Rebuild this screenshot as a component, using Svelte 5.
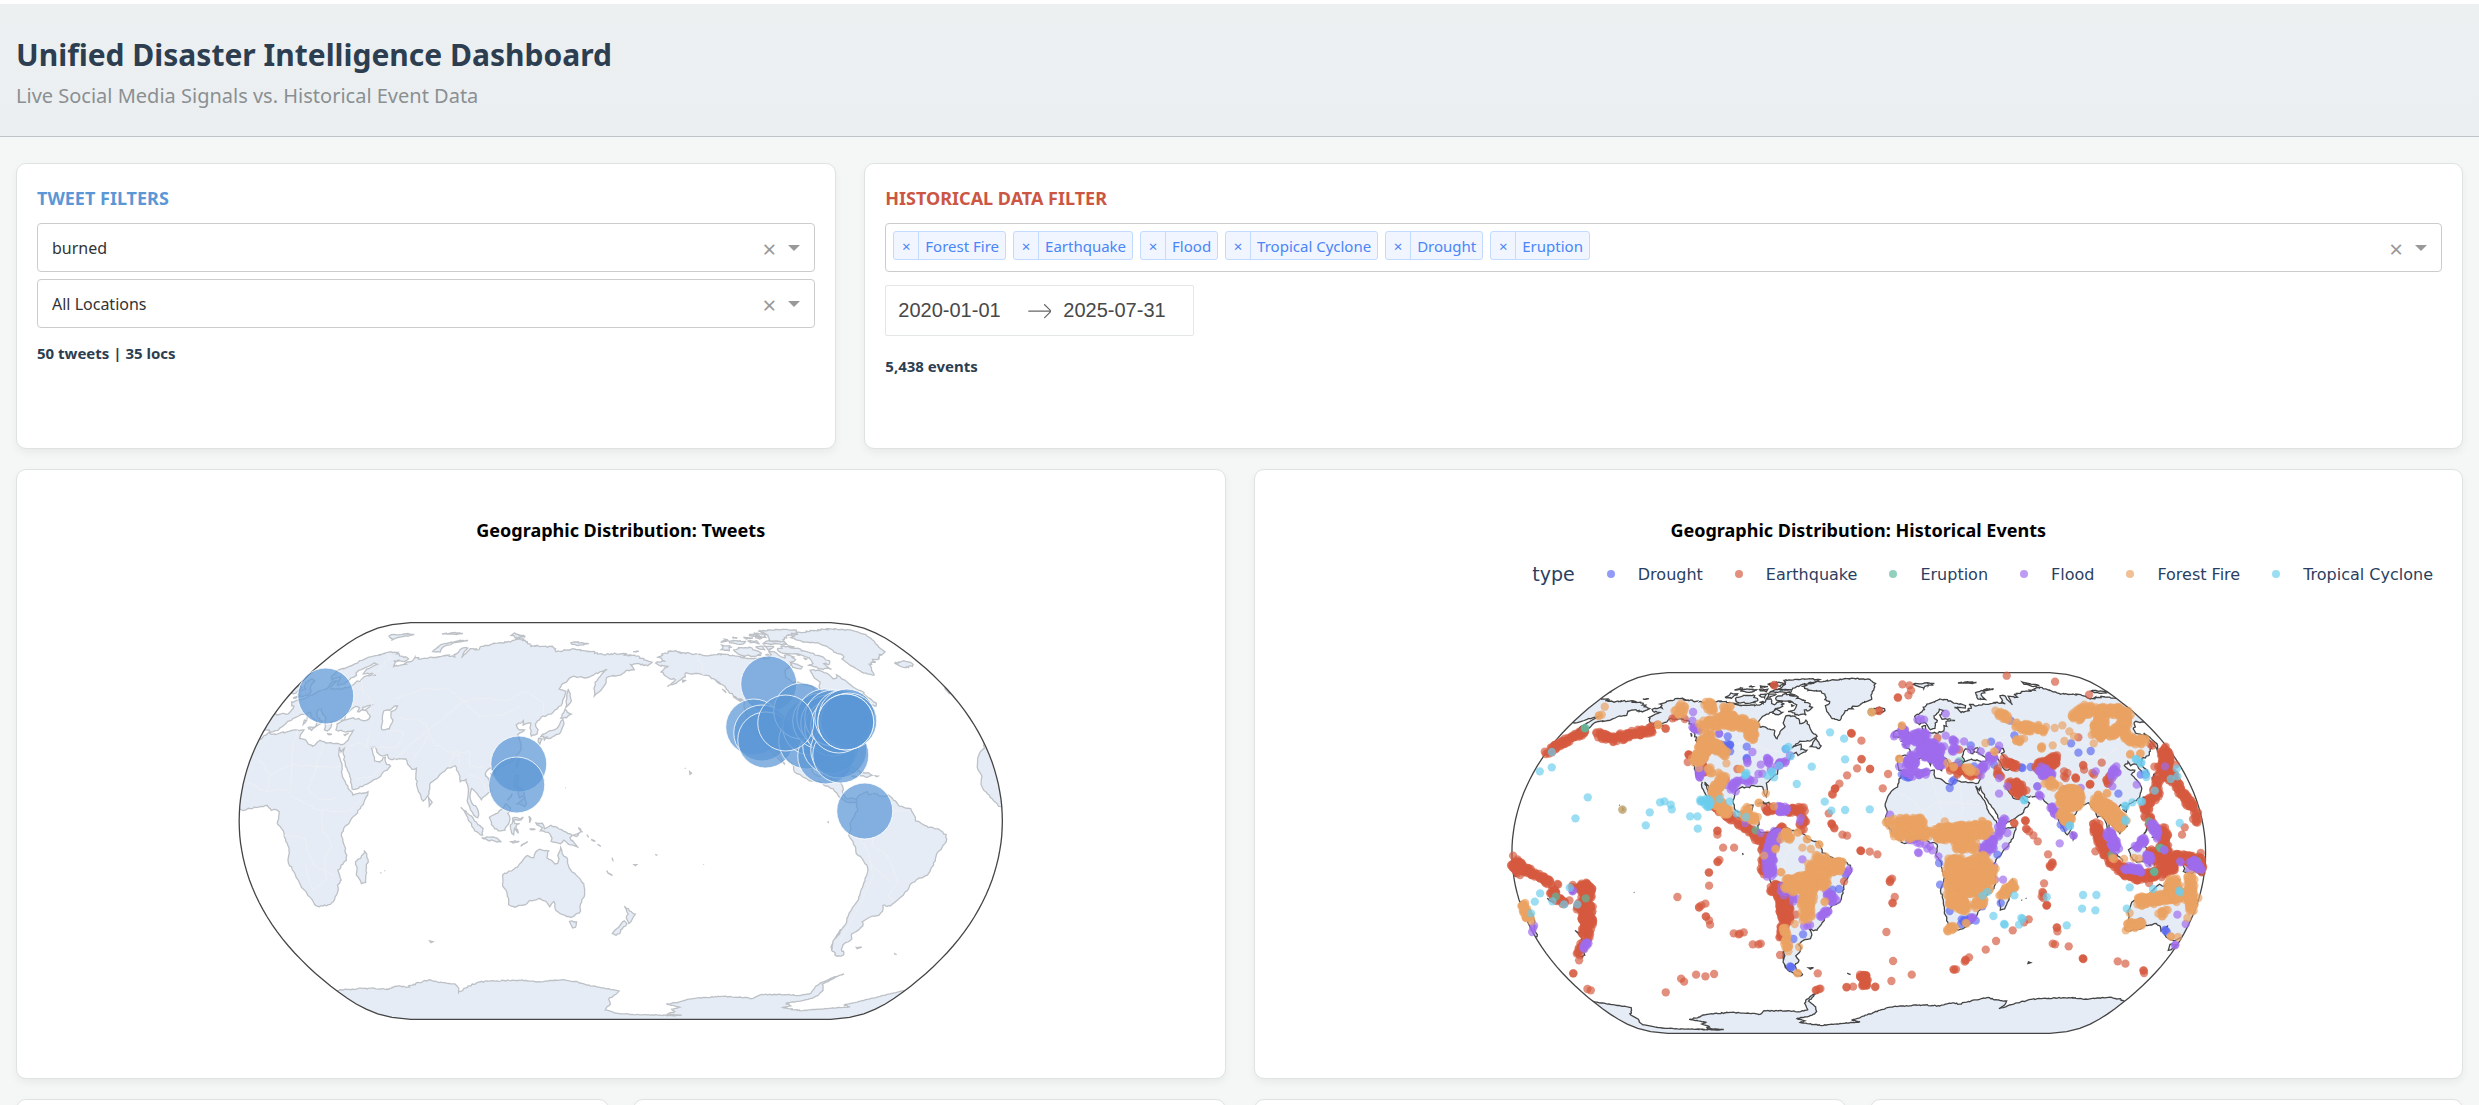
<script>
  // natural earth projection, input in degrees
  function project(lon, lat) {
    const l = (lon * Math.PI) / 180;
    const p = (lat * Math.PI) / 180;
    const p2 = p * p;
    const p4 = p2 * p2;
    return [
      l * (0.8707 - 0.131979 * p2 + p4 * (-0.013791 + p4 * (0.003971 * p2 - 0.001529 * p4))),
      -p * (1.007226 + p2 * (0.015085 + p4 * (-0.044475 + 0.028874 * p2 - 0.005916 * p4))),
    ];
  }

  // small seeded generator so the page looks the same on each load
  function makeRandom(seed) {
    let s = seed;
    return () => {
      s = (s * 1664525 + 1013904223) % 4294967296;
      return s / 4294967296;
    };
  }

  function parse(text) {
    return text.trim().split(/\s+/).map((p) => p.split(",").map(Number));
  }

  const landRings = [
    // europe, asia, africa
    "-6,36 -9,33 -10,29.5 -13,28 -16,24 -17,21 -16,18 -17.3,15 -16.5,12.5 -15,11 -13,9 -11,7 -8,4.5 -4,5 1,6 4,6.3 6,4.3 8.5,4.6 9.7,3.8 9.7,1 9,-1 12,-5 13,-9 13.7,-11 12,-17 14,-22 15,-27 18,-32 18.2,-34 20,-34.8 25,-34 28,-32.8 31,-30 32.6,-28 33,-26 35.5,-24 35,-20 37,-18 40,-16 40.6,-14 40,-10 39,-6 41,-2 44,1 48,5 51,10.5 51,12 48,11.2 44,10.5 43,12 40,15 37.3,19 36.5,22 34,26 32.4,30 34,28 35,29.5 35,28 39,21.5 42,17 43.3,13 45,13 50,15 55,17.5 59.8,22.3 57,24 56.3,26 54,24 51.5,24.5 51,26 50,27 48,30 50,30 51.5,28 54,26.6 57,27 58,25.5 62,25 66.5,25.2 69,22.3 70.5,21 72.5,21.5 73,17 75,12 77.5,8.1 80,11 80.2,15.5 82.5,17 87,21.2 91,22.5 94,18 94.4,16 97,17 98.6,13 98.3,8.3 101,3.5 103.5,1.3 104,2.5 103.3,5 100.5,7.5 99.5,10 100,13.2 101,12.7 103,11 105,8.7 107,10.4 109.2,12 108.5,15.5 106,19 108,21.6 110,20.5 113.5,22.2 117,23.5 119.8,26 122,29.5 121.5,31.5 119.3,35 122.4,37 119,37.5 117.8,39 121,40.8 121.3,39 125,39.8 125,37.8 126.3,34.5 129,35.3 129.3,37 127.5,39.5 130,42.3 135,43.6 140,48 141,53 137,54 138,56 143,59.3 152,59 155,60 160,61.7 163,62.5 160,60.5 156.5,57 156.7,51 160,53.3 162.5,56.2 163,59 170,60 174,62 179,62.5 177,64.8 182,65.3 187,64.3 190,66 185,67 180,69 170,70 160,69.6 152,71 140,72.5 130,71 127,73.5 113,74 107,76.7 104,77.7 98,76.2 87,75 80,73.5 80.5,72 77,72.3 74.5,72.5 73,68 72,71 72.5,72.8 69,72.8 67,69.5 68.5,68.4 64,69.4 60,68.7 54,68.4 47,67.5 44,68.4 44,66.2 40,64.7 36,64 34.8,66 33,66.6 40,66.3 41,67.5 33,69.4 28,71 22,70 15,68 12.5,65.5 9,63.7 5,62 5.3,59 7,58 10.5,59.3 12,57 13,55.5 16,56.2 17,58.8 18.8,60 17.3,61 17.5,62.3 21,64 22.5,65.7 25,65 21.5,62.8 22,60.6 28,60.5 30,60 24,59.4 23.6,58 24,57.2 22,57.5 21,55 19,54.4 14,54 11,54 10,55 10.5,57.5 8.2,57 8.7,54 5,53 2.5,51.2 1,50 -1.5,49.5 -4.7,48.5 -1.3,46 -1.8,43.5 -9,43.2 -9,38.7 -8.8,37 -6.5,37 -5.5,36 -2,36.8 0,39.5 3,42 5,43.3 9,44.3 10.5,42.8 12.3,41.7 15.7,40 16,38.1 17,39 18.3,39.9 16,41.6 14,42.5 12.5,44 12.3,45.4 13.7,45.6 15.5,44 19,42 19.5,40.3 21.3,37 23,36.6 24,38 22.8,40.3 26,40.8 29,41.1 28,43 29.5,45.3 31,46.6 33.5,46 33.5,44.5 36.3,45.2 35,46.3 39,47.2 37,45 41.5,42.5 41.3,41.3 38,41 33,42 29,41 26.3,39.5 27.2,37 30.5,36.6 32.5,36.1 36,36.8 35.5,33 34,31.2 31,31.5 25,31.7 21.5,32.8 20,31 19,30.3 15.3,32.2 11,33.5 10.5,35 11,37 5,36.8 -2,35.1 -5,35.5 -6,36",
    // north america
    "-168,65.6 -164,66.5 -162,66.2 -164,67.8 -166,68.4 -161,70.3 -156,71.2 -149,70.5 -141,69.6 -135,69 -128,70 -122,69.7 -115,68.2 -108,67.8 -98,67.8 -95,69.5 -95,71.8 -91,70 -88,68 -85,69.6 -81.5,68.5 -84,66.3 -87,64.8 -93,62 -94.5,59 -92.5,57 -88,56.5 -82.3,55 -82,53 -79.8,51.3 -79,54.5 -76.7,57 -78.5,58.8 -78,62.3 -73.7,62.3 -69.5,61 -68,58.5 -66,58.7 -64.5,60.2 -61.5,57 -60,55 -56,52.5 -60,50.2 -66,50.2 -70,47 -65,48.8 -64.5,46.3 -61,46 -65.7,43.6 -67,45 -70,43.7 -70.2,41.8 -74,40.6 -75.8,37.5 -75.8,35.3 -78,34 -81.3,31.3 -80.1,27 -80.5,25.3 -82,27 -83,29.5 -85,29.8 -89.5,30.2 -90,29.2 -94,29.6 -97.2,27.7 -97.8,22.5 -96,19 -94.5,18.2 -91.5,18.6 -90.3,21 -87,21.4 -88,17.5 -88.5,15.8 -84,15.7 -83.3,14 -83.6,11 -82,9 -80,9.3 -77.4,8.6 -77.8,7.5 -80,7.6 -83,8.2 -85.8,10.2 -88,13.1 -92,14.5 -94.5,16.1 -98,16.2 -102,18 -105.5,20 -105.5,22.5 -109,25.8 -112.5,30 -114.7,31.5 -113,28.8 -111,25.5 -109.5,23 -112,25 -115,28.5 -117,32.3 -120.6,34.6 -122.5,37.5 -124.3,40.3 -124,46 -123,48.5 -128,51 -131,55 -136,58.5 -140,60 -146,60.8 -151.5,61 -152,59.3 -157,57 -163,55 -158,58 -162,59 -165.5,61.5 -161,64 -166,64.5 -168,65.6",
    // south america
    "-77.4,8.6 -75.5,10.7 -72,12 -71.5,10.8 -68.5,11.2 -65,10.1 -62,10.6 -60,8.5 -57,6 -52,5 -50,1.5 -50,0 -47.5,-.8 -44,-2.7 -39,-3.2 -35.3,-5.5 -35,-8.5 -38.5,-13 -39.2,-18 -41,-22 -44.5,-23.2 -48,-25.7 -48.7,-28.5 -52,-32.5 -54,-34.5 -58,-34.3 -57,-36.5 -58,-38.3 -62,-39 -65,-41 -63.7,-42.5 -65.5,-44.8 -67.5,-46 -66,-48 -69,-50.5 -68.5,-52.4 -65.3,-54.8 -69,-55.3 -73.5,-52.8 -75.5,-49 -75,-46.5 -73,-42 -73.5,-37.5 -71.6,-33 -71.3,-29 -70.2,-20 -71.3,-17.8 -76,-14 -79,-8.5 -81.2,-6 -80.3,-3.3 -80.8,-1 -79,1.5 -77.3,4 -77.4,8.6",
    "-73,78.2 -65,80.8 -50,82.3 -35,83.5 -22,82.5 -18,80 -20,76 -22,72 -24,70.2 -30,68.2 -37,66 -40,65 -43,60.1 -48,61 -52,64.5 -53.5,67.5 -51,69.7 -54.5,70.7 -55,73 -59,75.6 -68,76 -71,77",
    "-81,73.6 -76,72.7 -68,70.2 -62,66.7 -64,65 -67,65.3 -65,62.7 -71,63 -77.5,64.5 -73.5,65.3 -73,68 -78,70 -87,70.2 -89,71.3 -85,73.6",
    "-117,71.3 -113,73 -106,73.3 -101,70 -105,68.8 -114,69.2",
    "-125,72 -123,74.2 -117,73.3 -120,71.5",
    "-90,76.5 -80,76.3 -75,79 -64,81.5 -62,82.6 -75,83.1 -90,82 -87,79.5",
    "-95,75 -80,74.7 -80,75.8 -90,76.6",
    "-117,75.5 -110,74.7 -106,76 -115,76.5",
    "-122,76 -117,76.5 -119,77.4",
    "-113,77.8 -110,78.1 -112,78.5",
    "-100,79.5 -93,79.2 -96,80",
    "-99,69.3 -96,68.6 -97,69.8",
    "-79.5,69.8 -76.8,69.5 -78,69.2",
    "-76.5,68 -75,67.5 -76,67.2",
    "-80.5,73.7 -77,73.4 -79,72.8",
    "-97.5,78.2 -93,77.8 -95,77.5",
    "-86.5,66 -81,64 -83,62.8 -87,63.6",
    "-95,81 -88,80 -90,78.3 -96,79",
    "-96,74 -90,73.9 -92,72.7 -95,72.2",
    "-102,73 -97,71.7 -97,73.8",
    "-104,76.4 -98,75 -98,76.6",
    "-105,78.5 -99,78 -104,77.5",
    "-59.3,47.7 -56.5,51.5 -53,48 -54,46.8",
    "-84.8,22 -82,23 -77,21.8 -74.3,20.2 -77.5,19.9 -81,22",
    "-74,19.8 -70,19.7 -68.5,18.6 -71,17.8 -74.2,18.4",
    "-67,18.4 -65.7,18.3 -66.5,18",
    "-78.3,18.3 -76.3,18.1 -77.3,17.8",
    "-24,65.5 -20,66 -16,66.4 -13.7,65 -18.5,63.5 -22.5,64",
    "-5.5,50.1 1.2,51.2 1.5,52.7 -.5,54 -2,55.8 -2,57.5 -5,58.5 -6,56.7 -4.8,54.8 -3,54 -4.8,53 -4.5,51.7 -3,51.4",
    "-10,52 -6.3,52.2 -5.7,54.5 -8,55.2 -10,54",
    "11,79.5 20,80.3 27,80 20,78.5 17,76.8",
    "46,80.4 54,80.2 60,80.6 52,80.9",
    "52,71 57,70.8 56,73.3 62,75.7 68.5,76.8 62,76.4 55,75 52,72",
    "95,79.5 96,81 102,79.4 105,78.5 100,78",
    "138,75.5 145,75.6 150,75 142,74.2",
    "178.8,71 182.5,71.3 180,70.9",
    "142,54 143.5,52 144.6,49 143,47 142,46.2 142,50",
    "140,41.8 141.7,45.4 145.3,43.5 143,42",
    "141.2,41.3 142,39.5 140.7,36 138,34.7 136,33.6 131,34.3 133,35.5 136.5,36.8 139.5,38.5",
    "130,33.5 131.8,33.3 131,31.3 130,32.2",
    "132.5,34 134.5,34.2 133,32.9",
    "121,25 122,25 120.8,22 120.2,23.3",
    "108.7,19.3 110.8,20 110,18.3",
    "80,9.6 81.8,7.5 80.5,6",
    "49.3,-12 50.4,-15.7 49,-19 47,-25 44.8,-25.5 43.4,-22 44.4,-19.5 44.3,-16.5 47,-15.2",
    "95.4,5.6 98,4 100.5,2 103,-.5 106,-3 105.7,-5.8 102,-4 98.8,1.5",
    "105.3,-6.8 108.5,-6.6 112.5,-7 114.5,-8.6 108,-7.8",
    "109,1.5 111.3,2.6 113,3.2 116.7,7 119,5.2 117.7,3 118.8,1 116.3,-3.8 114.5,-4 111.5,-3.2 110,-1.5",
    "120,1.2 123,.9 125,1.6 124,.4 120.5,.5 121,-1 123.3,-1 121.6,-2 122.6,-5 120.9,-3 120.4,-5.6 119.5,-5 119,-3",
    "119,-8.4 123,-8.3 120,-9",
    "123.6,-10.3 127,-8.4 125,-9.2",
    "127.7,2 128.6,1 128,-.7",
    "128,-3.2 130.7,-3.3 129,-3.6",
    "120.5,18.5 122.2,18.3 121.6,16 121.8,14 124,12.7 120.7,13.8 120,16",
    "122,7 124,8.4 125.5,9.7 126.4,7 125.5,5.8 124,6.6",
    "117.3,8.3 119.5,11.2 118.5,9.3",
    "122,11.6 125,12.3 125.2,10.3 123,9.4",
    "131,-.8 134,-.9 135,-3.2 138,-1.7 141,-2.6 145,-4.4 148,-6 147,-6.8 150.5,-10.6 147,-9.7 144,-7.8 142.5,-9.3 138,-8.3 138.5,-7 137.5,-5.2 133,-4 134,-2.8 131.5,-1.6",
    "148.5,-5.8 152.2,-4.3 150,-6.3",
    "151,-2.7 153,-4.6 151.5,-3.4",
    "155,-5.5 155.8,-6.7",
    "157,-7.5 159,-8.3",
    "160,-9.5 161.5,-10.4",
    "164.2,-20.2 167,-22.3 165,-21.2",
    "166.8,-15 167.4,-16.4",
    "177.4,-17.8 178.6,-17.8 178,-18.2",
    "114,-22 113.5,-25.5 115.5,-31.5 115,-34 118,-35 123.5,-34 126,-32.3 131,-31.5 134,-32.8 135.5,-34.8 137.8,-32.7 138,-35.5 140,-37.5 143.5,-38.8 146.4,-39 150,-37.4 151.5,-33 153.2,-30 153,-25.5 149.5,-22 146.2,-19 145.3,-15 143.8,-14.3 142.5,-10.8 141.6,-13 140.8,-17.3 139.5,-17.5 135.8,-15 136.8,-12.2 132.5,-11.5 130.5,-12.7 129.5,-15 128,-14.8 126.5,-14 123.8,-16.5 122,-18.2 118.5,-20.3",
    "144.7,-40.8 148.3,-41 147.5,-43.2 146,-43.5",
    "172.8,-34.6 175.5,-36.6 178.4,-37.8 176.8,-40 175.2,-41.6 173.8,-39.3 174.8,-37.8",
    "172.8,-40.6 174.2,-41.8 171,-44.2 170.5,-45.8 168.5,-46.6 166.6,-45.8 169,-43.7",
    "-61,-51.6 -58,-51.5 -60,-52.2",
    "-155.9,20.2 -155,19.5 -155.8,19",
    "-158,21.6 -157.8,21.3",
    "68.8,-48.8 70.4,-49.2 69,-49.6",
    "-38,-54.1 -36,-54.7",
    "-91.3,0 -91,-.9",
    "-154,57.8 -152.4,57.7 -154,57",
    "-133,54 -131.7,53 -131.5,52.3",
    "-135,58 -133,56 -134.5,56.8",
    "-74.5,-44 -73.8,-46 -75,-48 -74.5,-46",
    "-75,-50 -73.8,-52 -74.8,-51.5",
    "-128.3,50.7 -124,49 -125,48.8",
    "8.5,41 9.7,41 9.2,39.2",
    "9,42.8 9.4,41.5",
    "12.5,38 15.5,38.2 15,36.8",
    "23.6,35.5 26.2,35.2 24.8,35",
    "32.4,35 34.4,35.6 33,34.7",
    "55.2,-21 55.7,-21.2",
    "57.4,-20.1 57.7,-20.4",
    "144.7,13.4 144.9,13.6",
    "-172.6,-13.6 -171.6,-14",
    "-149.4,-17.6 -149.2,-17.8",
  ].map(parse);

  const lakes = [
    "50,45 51.5,46.8 53,46.8 53,45.3 51,44.5 52.5,42 54,41 53.9,37.3 50,37.4 49,40.5 47.5,43 47,44.8",
  ].map(parse);

  const antarctica = parse(
    "-180,-84.5 -165,-84.7 -150,-85.4 -143,-85 -155,-84.2 -150,-82.5 -153,-81 -148,-79.8 -158,-78 -150,-77 -145,-75.6 -135,-74.6 -120,-74 -110,-74.5 -102,-75 -98,-73 -92,-73.2 -80,-73.2 -75,-73.7 -67,-72.5 -68,-69 -66,-67 -62,-65 -57,-63.3 -59,-64 -62,-66 -65,-68 -61,-71 -61,-73.5 -63,-75 -72,-77 -77,-77.5 -72,-79 -76,-80 -60,-82 -50,-81 -42,-80.5 -30,-79.5 -36,-78.5 -28,-76.2 -20,-74 -15,-72.5 -10,-71.2 0,-70.5 15,-70 25,-70.5 33,-68.8 38,-69.5 45,-67.8 50,-67 55,-66 60,-67.3 69,-67.9 69.5,-70 67.5,-72 73,-70 79,-68.3 85,-67 100,-66.3 110,-66.2 120,-67 128,-66.3 135,-66 145,-67 150,-68.5 160,-69.8 170,-71.4 166,-74 163,-75.5 164,-78 161,-80 160,-81.5 168,-83.5 180,-84.5",
  );

  const borderLines = [
    "-9,27 -5,25 3,19 12,23 25,22 36,22",
    "8,37 9,31 12,23 14,13",
    "24,31 24,20 22,13 28,9 36,9",
    "3,19 3,12 12,13 15,10 27,5 35,4",
    "-12,15 -5,15 3,12",
    "12,-6 22,-7 22,-11 24,-18 33,-22",
    "20,-18 20,-28 28,-24 30,-15 34,-10 30,-3 30,4",
    "35,4 42,4 48,8",
    "44,37 46,30 40,32 36,29",
    "44,17 52,18 55,22",
    "47,30 61,30 62,36 54,37",
    "61,25 67,31 74,37 68,41 56,42",
    "50,50 62,54 76,54 87,49 98,50 110,49 119,53 130,48 131,43",
    "87,49 80,42 74,37 79,31 88,28 97,28 98,22 105,22",
    "87,49 97,43 110,43 119,47",
    "70,25 74,31 74,35",
    "88,22 89,27 92,27 93,22",
    "98,19 104,17 107,12",
    "24,70 30,68 28,60",
    "24,58 31,52 38,49 40,44",
    "7,54 7,46 14,46 24,47 28,44",
    "-141,70 -141,60",
    "-123,49 -95,49 -83,46 -76,45 -70,46",
    "-117,32 -106,31 -98,26",
    "-70,12 -67,2 -70,-4 -70,-10 -62,-14 -58,-20 -54,-25 -57,-30 -53,-33",
    "-67,2 -60,4 -52,4",
    "-79,-4 -72,-12 -69,-18 -67,-23 -70,-35 -72,-50",
    "-69,-18 -62,-22 -58,-25",
  ].map(parse);

  // break long edges up so that coasts look ragged
  function roughen(ring, random, closed) {
    const out = [];
    const last = closed ? ring.length : ring.length - 1;
    for (let i = 0; i < last; i++) {
      const [x1, y1] = ring[i];
      const [x2, y2] = ring[(i + 1) % ring.length];
      const len = Math.hypot(x2 - x1, y2 - y1);
      const steps = Math.max(1, Math.round(len / 1.1));
      out.push([x1, y1]);
      // the far north is more broken up than the rest
      const north = y1 > 66 ? 1.8 : 1;
      for (let k = 1; k < steps; k++) {
        const t = k / steps;
        const j = Math.min(0.8, len * 0.24);
        out.push([
          x1 + (x2 - x1) * t + (random() - 0.5) * j * north * north,
          y1 + (y2 - y1) * t + (random() - 0.5) * j * (y1 < -60 ? 0.7 : 1),
        ]);
      }
    }
    if (!closed) out.push(ring[ring.length - 1]);
    return out;
  }

  function toPath(points, center, scale, closed) {
    let d = "";
    // three copies, the sphere outline clips what falls outside
    for (const turn of [-360, 0, 360]) {
      const shifted = points.map(([lon, lat]) => [lon - center + turn, lat]);
      if (shifted.every(([lon]) => lon < -185) || shifted.every(([lon]) => lon > 185)) continue;
      d +=
        "M" +
        shifted
          .map(([lon, lat]) => project(lon, lat).map((v) => (v * scale).toFixed(1)).join(","))
          .join("L") +
        (closed ? "Z" : "");
    }
    return d;
  }

  function buildMap(center, scale) {
    const random = makeRandom(11);
    const sphere = [];
    for (let lat = -90; lat <= 90; lat += 3) sphere.push([180, lat]);
    for (let lat = 90; lat >= -90; lat -= 3) sphere.push([-180, lat]);
    const coast = roughen(antarctica, random, false);
    const edge = sphere.map(([lon, lat]) => project(lon, lat).map((v) => (v * scale).toFixed(1)).join(","));
    return {
      outline: "M" + edge.join("L") + "Z",
      land: landRings.map((r) => toPath(roughen(r, random, true), center, scale, true)).join(""),
      lakes: lakes.map((r) => toPath(roughen(r, random, true), center, scale, true)).join(""),
      ice: toPath([...coast, [180, -90], [-180, -90]], center, scale, true),
      iceCoast: toPath(coast, center, scale, false),
      borders: borderLines.map((r) => toPath(roughen(r, random, false), center, scale, false)).join(""),
    };
  }

  const tweetMap = buildMap(171, 139.5);
  const eventMap = buildMap(-31, 126.8);

  const tweets = parse(`
    -295,-125 -102,-57 -104,-36 148,-137 133,-94 141,-88 145,-81 186,-80
    190,-94 205,-65 210,-75 181,-110 200,-100 204,-104 208,-98
    212,-93 218,-71 220,-66 212,-103 218,-96 222,-103 226,-104
    228,-100 165,-98 225,-99 225,-99 244,-10`);

  // Positions on the event map. "spots" are single events, "bands" are
  // [spread, count, path] for the crowded belts. East starts at x = 1080.
  const eventTypes = [
    {
      name: "Drought",
      color: "#5f6cf2",
      west: {
        spots: "640,355 711,290 768,321 768,355 768,358 718,335 715,318 885,328 660,490 937,884 908,898 900,982 898,980 902,984 1045,748 1025,750 1065,705 1010,765 685,282",
        bands: [[8, 8, "690,315 715,320"]],
      },
      east: {
        spots: "297,445 305,425 310,421 360,317 421,306 480,243 491,287 661,311 683,339 720,334 515,385 512,383 540,382 803,462 640,450 630,555 640,565 870,405 885,405 268,735 265,670 297,814 945,873 942,871 948,876 870,845 395,800 450,790 560,440 215,400 430,375 440,645 370,380",
        bands: [[8, 8, "160,405 175,415"], [8, 12, "325,848 370,838"]],
      },
    },
    {
      name: "Earthquake",
      color: "#d65a40",
      west: {
        spots: "524,266 525,267 545,236 553,233 582,238 500,255 67,648 200,733 202,735 262,940 258,942 265,962 248,1001 247,1001 290,1048 300,1052 594,345 595,346 593,344 591,367 560,772 680,573 680,574 680,585 697,624 730,624 686,661 680,666 681,667 654,698 655,699 655,738 644,792 632,797 625,802 625,804 645,830 646,831 655,842 658,855 729,881 744,884 747,882 759,878 786,914 803,914 810,912 525,1058 571,1017 580,1026 616,1005 644,1010 670,1003 700,425 705,420 868,946 1060,725 981,1001 977,1051 975,1052 989,1047 985,1048 1067,1043 1068,1042 1087,1041 1082,281 1083,282 1081,280 1112,303 1112,358 1113,359 1099,386 1138,388 1069,407 1046,432 1033,447 1032,448 1034,446 1026,465 1024,463 1014,521 1023,553 1024,555 1022,551 1030,564 1031,566 1055,585 1069,588 1110,633 1111,634 1109,633 850,136 851,137 946,546 915,825 740,388 1154,1041 1153,1042",
        bands: [
          [9, 65, "162,342 200,318 240,298 285,275"],
          [11, 95, "318,280 355,298 410,288 460,275 488,268"],
          [10, 100, "75,665 100,688 140,708 165,715 185,755 205,785 228,785"],
          [18, 50, "75,672 85,690"],
          [12, 25, "250,742 300,742"],
          [18, 190, "287,740 290,880"],
          [10, 18, "285,900 265,945"],
          [12, 15, "262,805 268,795"],
          [9, 80, "660,495 700,520 745,550 790,580 805,605"],
          [9, 50, "820,512 850,508 900,512 940,510"],
          [10, 14, "930,520 935,570"],
          [10, 12, "875,560 850,600"],
          [12, 60, "825,590 820,700"],
          [18, 170, "850,740 880,770 885,850"],
          [10, 18, "880,860 870,905"],
          [9, 35, "1112,1008 1125,1015 1120,1040"],
          [5, 12, "635,375 640,400"],
        ],
      },
      east: {
        spots: "58,388 112,403 96,446 57,636 80,644 119,720 124,717 117,725 118,727 132,772 126,791 125,789 107,877 127,964 122,1024 183,1005 155,134 176,137 181,152 173,167 142,174 141,173 468,108 613,126 715,165 84,214 85,213 490,550 491,551 524,543 525,544 523,542 526,567 528,569 535,575 548,587 561,605 592,644 605,668 604,670 606,674 598,680 597,678 600,682 580,731 575,757 577,760 573,770 578,775 588,797 587,798 589,796 534,839 520,848 486,872 618,863 619,864 620,875 606,912 613,914 654,920 697,957 698,958 696,956 801,965 824,972 879,993 878,992 880,1000 436,904 405,930 355,953 345,962 344,960 342,966 310,990 308,989 316,989 640,395 650,400 645,415 675,415 676,417 674,413 698,378 697,376 683,293 753,369 718,434 717,435 719,433 730,405 775,410 725,400 770,425 734,635 823,710 900,315 905,318 975,375 1002,563 994,585 1050,640 895,730 260,295 325,330 640,410 700,390",
        bands: [
          [15, 40, "298,388 375,405"],
          [9, 28, "455,362 498,383"],
          [9, 7, "435,390 450,408"],
          [20, 36, "482,435 508,452"],
          [14, 80, "560,380 590,375 615,358"],
          [13, 370, "735,550 745,600 780,660 810,690 860,710 920,705 960,685 975,650 1050,665"],
          [16, 70, "935,570 945,650"],
          [20, 55, "905,640 960,680"],
          [15, 100, "945,330 945,400"],
          [16, 40, "925,385 960,410"],
          [12, 80, "960,400 990,460 1030,510 1040,550"],
          [11, 55, "925,410 915,465 885,500 885,530"],
          [10, 16, "890,530 910,570"],
          [12, 50, "1000,650 1058,690"],
          [8, 8, "765,440 775,410"],
        ],
      },
    },
    {
      name: "Eruption",
      color: "#5dba9e",
      west: { spots: "283,265 282,266 195,771 285,776 395,510 795,572 766,532", bands: [] },
      east: { spots: "895,545 905,565 928,624 930,626 940,630 910,695 911,697 1040,665 783,645 325,365 62,217", bands: [] },
    },
    {
      name: "Flood",
      color: "#9f6bee",
      west: {
        spots: "607,217 605,243 685,282 785,337 810,375 803,403 815,402 770,365 770,370 720,450 735,455 770,540 763,550 930,535 928,545 848,660 935,659 1075,690 1068,700 1072,695 940,860 958,856 950,858 245,755 247,753 130,858 124,877 127,865 810,580 825,640 870,755 740,430",
        bands: [
          [7, 10, "607,262 625,268"],
          [6, 8, "830,350 835,370"],
          [8, 12, "845,390 885,360 895,350"],
          [9, 18, "715,440 745,430 785,422"],
          [8, 14, "628,385 630,415"],
          [12, 20, "865,508 878,508"],
          [14, 150, "855,580 835,650 838,710"],
          [12, 14, "870,745 912,785"],
          [12, 22, "1010,755 1035,785"],
          [9, 14, "990,835 1008,812"],
          [7, 10, "288,910 278,930"],
        ],
      },
      east: {
        spots: "130,290 133,285 200,240 220,240 210,238 285,222 145,380 285,288 340,305 322,370 360,330 390,335 445,318 440,330 390,408 445,415 445,462 470,440 560,440 565,465 566,467 570,470 735,395 785,440 858,435 465,620 470,580 118,525 202,638 204,640 245,632 263,650 457,720 668,587 669,588 627,611 943,380 980,825 1005,853 974,915 973,917 365,835 367,833 363,837 430,680 433,720 1015,690 990,668 988,665 280,320 640,450 690,445 940,630 942,632",
        bands: [
          [10, 22, "155,265 165,310"],
          [16, 45, "185,300 225,285"],
          [28, 170, "225,325 250,335"],
          [18, 36, "180,370 185,360"],
          [12, 28, "250,350 278,380"],
          [12, 20, "160,400 220,402"],
          [9, 12, "310,300 310,335"],
          [10, 12, "410,350 425,360"],
          [10, 14, "395,380 405,385"],
          [14, 40, "572,392 595,408"],
          [9, 12, "605,500 620,530"],
          [9, 14, "795,385 785,415"],
          [9, 14, "460,540 442,580"],
          [18, 42, "430,600 398,638"],
          [8, 9, "175,600 245,625"],
          [11, 50, "775,580 795,625"],
          [9, 18, "880,602 850,625"],
          [10, 26, "905,555 925,590"],
          [12, 20, "888,650 895,662"],
          [9, 26, "825,685 872,692"],
          [10, 26, "1018,660 1050,690"],
        ],
      },
    },
    {
      name: "Forest Fire",
      color: "#eba263",
      west: {
        spots: "342,201 325,227 324,229 333,225 503,255 502,256 395,510 707,371 748,388 750,389 625,385 803,490 805,489 825,461 850,500 920,578 921,579 948,598 950,599 960,628 935,624 985,614 986,615 855,627 854,629 820,648 870,697 872,698 1003,785 1001,787 1000,740 1005,738 912,853 925,922 921,1000 920,1001",
        bands: [
          [17, 22, "565,212 575,205"],
          [14, 26, "652,192 668,210"],
          [14, 24, "708,205 715,235"],
          [18, 150, "640,260 700,240 770,255 790,270"],
          [14, 30, "780,275 780,300"],
          [20, 120, "650,290 640,330 620,360"],
          [15, 40, "670,320 690,330"],
          [10, 8, "690,345 705,340"],
          [8, 7, "658,375 658,410"],
          [13, 130, "695,400 690,430 670,450 680,490 710,520"],
          [10, 34, "770,505 760,525 800,542"],
          [15, 22, "880,592 895,588"],
          [10, 14, "970,655 1010,660"],
          [20, 150, "960,690 1050,680"],
          [25, 220, "895,735 1000,720"],
          [19, 110, "955,740 945,830"],
          [8, 28, "880,865 890,930"],
          [9, 36, "97,795 115,840"],
        ],
      },
      east: {
        spots: "62,217 64,218 153,257 154,259 145,357 146,358 572,325 573,327 571,322 574,320 612,265 635,257 606,317 656,275 641,304 670,290 729,311 838,345 839,343 870,341 868,342 404,310 430,335 432,337 310,380 308,384 290,370 768,460 770,462 345,850 348,852 785,655 820,658 850,655 865,657 790,658 825,872 837,820 960,890 961,891 982,892 1010,835 1043,775 282,545 520,297",
        bands: [
          [9, 24, "440,218 472,236"],
          [12, 60, "492,260 580,268"],
          [8, 8, "500,306 515,298"],
          [16, 140, "672,235 700,210 740,215 825,215"],
          [18, 70, "750,240 740,285"],
          [15, 90, "740,285 810,270 830,230"],
          [12, 30, "820,280 845,305"],
          [12, 16, "862,308 880,300"],
          [9, 12, "345,390 370,390"],
          [14, 14, "592,430 615,435"],
          [32, 230, "650,475 670,475"],
          [14, 40, "635,520 655,545"],
          [20, 190, "735,480 770,510 812,550"],
          [13, 60, "110,548 215,545"],
          [19, 90, "140,580 240,578"],
          [23, 300, "265,580 400,575"],
          [20, 70, "320,612 365,615"],
          [10, 22, "400,550 415,570"],
          [13, 80, "290,668 410,665"],
          [32, 400, "305,700 415,705"],
          [22, 150, "300,745 400,745"],
          [20, 110, "300,775 340,800"],
          [13, 22, "378,795 395,780"],
          [8, 10, "375,650 410,652"],
          [10, 14, "290,868 312,865"],
          [12, 34, "455,768 488,735"],
          [20, 90, "965,725 970,775"],
          [15, 170, "865,787 925,775 1000,765"],
          [12, 80, "1020,712 1022,805"],
          [10, 12, "925,825 945,815"],
          [12, 26, "828,855 870,855"],
        ],
      },
    },
    {
      name: "Tropical Cyclone",
      color: "#6bcdee",
      west: {
        spots: "147,395 183,383 183,337 291,473 254,536 465,557 477,518 508,488 521,485 540,495 543,509 598,530 620,530 621,567 687,478 717,486 738,522 766,532 885,328 893,322 900,350 865,378 845,395 843,397 850,413 830,408 765,405 763,408 767,400 918,433 963,381 1018,278 1060,297 1063,359 1002,486 1022,513 1063,511 148,761 132,786 121,821 237,744 185,785 220,794 260,794",
        bands: [[13, 16, "638,482 655,492"]],
      },
      east: {
        spots: "57,509 428,829 460,853 462,855 512,835 516,838 505,855 648,857 697,766 737,766 694,807 734,812 588,772 491,767 410,757 395,768 837,743 907,748 985,753 988,758 828,807 657,557 658,559 520,480 521,482 823,540 824,545 825,500 823,498 845,488 870,485 874,486 858,360 855,358 870,372 872,368 885,400 887,412 912,453 978,387 980,410 960,418 987,550",
        bands: [],
      },
    },
  ];

  function scatter(panel, dx, random) {
    const dots = parse(panel.spots).map(([x, y]) => [x + dx, y]);
    for (const [spread, count, path] of panel.bands) {
      const pts = parse(path);
      const lengths = pts.slice(1).map((p, i) => Math.hypot(p[0] - pts[i][0], p[1] - pts[i][1]));
      const total = lengths.reduce((a, b) => a + b, 0);
      for (let n = 0; n < count; n++) {
        let at = random() * total;
        let i = 0;
        while (i < lengths.length - 1 && at > lengths[i]) at -= lengths[i++];
        const t = at / lengths[i];
        const angle = random() * Math.PI * 2;
        const r = Math.sqrt(random()) * spread;
        dots.push([
          Math.round(pts[i][0] + (pts[i + 1][0] - pts[i][0]) * t + Math.cos(angle) * r + dx),
          Math.round(pts[i][1] + (pts[i + 1][1] - pts[i][1]) * t + Math.sin(angle) * r),
        ]);
      }
    }
    return dots;
  }

  const random = makeRandom(42);
  const layers = eventTypes.map((t) => ({
    color: t.color,
    dots: [...scatter(t.west, 0, random), ...scatter(t.east, 1080, random)],
  }));

  let keyword = "burned";
  let place = "All Locations";
  let startDate = "2020-01-01";
  let endDate = "2025-07-31";
  let selected = ["Forest Fire", "Earthquake", "Flood", "Tropical Cyclone", "Drought", "Eruption"];

  function removeType(name) {
    selected = selected.filter((s) => s !== name);
  }
</script>

<div class="page">
  <header>
    <h1>Unified Disaster Intelligence Dashboard</h1>
    <p>Live Social Media Signals vs. Historical Event Data</p>
  </header>

  <main>
    <div class="row filters">
      <section class="card tweet-filters">
        <h2 class="blue">TWEET FILTERS</h2>
        <div class="dropdown">
          <select aria-label="Keyword" bind:value={keyword}>
            <option>burned</option>
          </select>
          <button class="clear" aria-label="Clear keyword">×</button>
          <span class="caret"></span>
        </div>
        <div class="dropdown">
          <select aria-label="Location" bind:value={place}>
            <option>All Locations</option>
          </select>
          <button class="clear" aria-label="Clear location">×</button>
          <span class="caret"></span>
        </div>
        <p class="summary">50 tweets | 35 locs</p>
      </section>

      <section class="card event-filters">
        <h2 class="red">HISTORICAL DATA FILTER</h2>
        <div class="dropdown">
          <div class="tags">
            {#each selected as name (name)}
              <span class="tag">
                <button aria-label={`Remove ${name}`} on:click={() => removeType(name)}>×</button>
                <span>{name}</span>
              </span>
            {/each}
          </div>
          <button class="clear" aria-label="Clear types" on:click={() => (selected = [])}>×</button>
          <span class="caret"></span>
        </div>
        <div class="dates">
          <input type="text" aria-label="Start date" bind:value={startDate} />
          <svg class="arrow" viewBox="0 0 1000 1000" aria-hidden="true">
            <path d="M694 242l249 250c12 11 12 21 1 32L694 773c-5 5-10 7-16 7s-11-2-16-7c-11-11-11-21 0-32l210-210H68c-13 0-23-10-23-23s10-23 23-23h806L662 275c-21-22 11-54 32-33z" />
          </svg>
          <input type="text" aria-label="End date" bind:value={endDate} />
        </div>
        <p class="summary">5,438 events</p>
      </section>
    </div>

    <div class="row maps">
      <section class="card map-card">
        <h3>Geographic Distribution: Tweets</h3>
        <svg class="map tweets" viewBox="-392 -206 784 412" role="img" aria-label="Map of tweets">
          <clipPath id="tweet-clip"><path d={tweetMap.outline} /></clipPath>
          <g clip-path="url(#tweet-clip)">
            <path class="land" d={tweetMap.land} />
            <path class="lake" d={tweetMap.lakes} />
            <path class="ice" d={tweetMap.ice} />
            <path class="coast" d={tweetMap.iceCoast} />
            <path class="border" d={tweetMap.borders} />
          </g>
          <path class="outline" d={tweetMap.outline} />
          {#each tweets as [x, y]}
            <circle class="bubble" cx={x} cy={y} r="28" />
          {/each}
        </svg>
      </section>

      <section class="card map-card">
        <h3>Geographic Distribution: Historical Events</h3>
        <div class="legend">
          <span class="legend-title">type</span>
          {#each eventTypes as t}
            <span class="legend-item">
              <i style:background={t.color}></i>
              {t.name}
            </span>
          {/each}
        </div>
        <svg class="map events" viewBox="-360 -190 720 380" role="img" aria-label="Map of historical events">
          <clipPath id="event-clip"><path d={eventMap.outline} /></clipPath>
          <g clip-path="url(#event-clip)">
            <path class="land" d={eventMap.land} />
            <path class="lake" d={eventMap.lakes} />
            <path class="ice" d={eventMap.ice} />
            <path class="coast" d={eventMap.iceCoast} />
            <path class="border" d={eventMap.borders} />
          </g>
          <path class="outline" d={eventMap.outline} />
          <g transform="scale(.3333) translate(-1104 -640)">
            {#each layers as layer}
              <g fill={layer.color} fill-opacity="0.68">
                {#each layer.dots as [x, y]}
                  <circle cx={x} cy={y} r="12.5" />
                {/each}
              </g>
            {/each}
          </g>
        </svg>
      </section>
    </div>

    <div class="row">
      <div class="pair">
        <section class="card chart-card"></section>
        <section class="card chart-card"></section>
      </div>
      <div class="pair">
        <section class="card chart-card"></section>
        <section class="card chart-card"></section>
      </div>
    </div>
  </main>
</div>

<style>
:global(body) {
  margin: 0;
  background: #f4f7f6;
}

.page {
  height: 100vh;
  overflow: hidden;
  border-top: 4px solid #fff;
  box-sizing: border-box;
  font-family: "Segoe UI", "Noto Sans", sans-serif;
  color: #2c3e50;
}

header {
  padding: 27px 16px 23px;
  background: linear-gradient(#ecf0f1, #eceff1);
  border-bottom: 1px solid #bdc3c7;
}

h1 {
  margin: 0;
  font-size: 30px;
  line-height: 48px;
  font-weight: 700;
}

header p {
  margin: 0;
  font-size: 20px;
  line-height: 34px;
  color: #8a8f92;
}

main {
  display: flex;
  flex-direction: column;
  gap: 20px;
  padding: 26px 16px 0;
}

.row {
  display: flex;
  gap: 28px;
}

.card {
  background: #fff;
  border: 1px solid #dfe2e2;
  border-radius: 10px;
  box-shadow: 0 4px 8px rgba(0, 0, 0, 0.05);
}

.tweet-filters,
.event-filters {
  flex: 1 1 0;
  min-width: 0;
  min-height: 244px;
  padding: 20px;
}

.event-filters {
  flex-grow: 2;
}

h2 {
  margin: 0 0 11px;
  font-size: 18px;
  line-height: 28px;
  font-weight: 700;
}

.blue {
  color: #5b97d6;
}

.red {
  color: #cb5644;
}

.dropdown {
  display: flex;
  align-items: center;
  height: 47px;
  margin-bottom: 7px;
  border: 1px solid #ccc;
  border-radius: 4px;
}

select {
  flex: 1;
  height: 100%;
  padding: 0 14px;
  border: none;
  background: none;
  appearance: none;
  font-family: inherit;
  font-size: 16px;
  color: #333;
}

.clear {
  width: 24px;
  height: 24px;
  padding: 0;
  border: none;
  background: none;
  font-family: inherit;
  font-size: 24px;
  line-height: 26px;
  color: #999;
}

.caret {
  margin: 0 14px 0 7px;
  border: 6px solid transparent;
  border-top-color: #999;
  border-bottom: none;
}

.summary {
  margin: 13px 0 0;
  font-size: 15px;
  line-height: 24px;
  font-weight: 700;
}

.tags {
  display: flex;
  flex: 1;
  gap: 7px;
  height: 100%;
  padding: 7px;
  box-sizing: border-box;
}

.tag {
  display: flex;
  height: 27px;
  border: 1px solid #c2dbff;
  border-radius: 3px;
  background: #f0f5ff;
  font-size: 15px;
  line-height: 28px;
  color: #4a86f7;
}

.tag button {
  width: 25px;
  padding: 0;
  border: none;
  border-right: 1px solid #c2dbff;
  background: none;
  font: inherit;
  line-height: 24px;
  color: inherit;
}

.tag span {
  padding: 0 6px;
}

.dates {
  display: flex;
  align-items: center;
  width: fit-content;
  height: 49px;
  margin: 13px 0 18px;
  padding-right: 14px;
  border: 1px solid #e4e7e7;
  border-radius: 2px;
}

.dates input {
  width: 128px;
  padding: 0 0 0 12px;
  border: none;
  box-sizing: border-box;
  font-family: Arial, "Liberation Sans", sans-serif;
  font-size: 20px;
  color: #484848;
}

.arrow {
  width: 26px;
  height: 26px;
  margin: 0 -2px 0 13px;
  fill: #666;
}

.maps {
  height: 610px;
}

.map-card {
  flex: 1;
  min-width: 0;
  box-sizing: border-box;
}

h3 {
  margin: 47px 0 0;
  font-size: 18px;
  line-height: 26px;
  font-weight: 700;
  text-align: center;
  color: #000;
}

.map {
  display: block;
  width: 100%;
}

.tweets {
  height: 412px;
  margin-top: 72px;
}

.events {
  height: 380px;
  margin-top: 75px;
}

.land,
.ice {
  fill: #e5ecf6;
}

.land,
.coast,
.lake {
  stroke: #444;
  stroke-width: 1.3;
}

.tweets .land,
.tweets .lake,
.tweets .coast {
  stroke: #bdc1c6;
}

.coast,
.border,
.outline {
  fill: none;
}

.lake {
  fill: #fff;
}

.border {
  stroke: #eef0f3;
  stroke-width: 1;
}

.outline {
  stroke: #444;
  stroke-width: 1.3;
}

.bubble {
  fill: #5b97d6;
  fill-opacity: 0.72;
  stroke: #fff;
  stroke-opacity: 0.8;
}

.legend {
  display: flex;
  justify-content: flex-end;
  align-items: center;
  height: 28px;
  margin-top: 17px;
  padding-right: 29px;
  font-family: Verdana, "DejaVu Sans", sans-serif;
  font-size: 16px;
  color: #2a3f5f;
}

.legend-title {
  font-size: 19px;
}

.legend-item {
  display: flex;
  align-items: center;
  margin-left: 32px;
}

.legend-item i {
  width: 8px;
  height: 8px;
  margin-right: 23px;
  border-radius: 50%;
  opacity: 0.68;
}

.pair {
  display: flex;
  flex: 1;
  gap: 24px;
}

.chart-card {
  flex: 1;
  height: 400px;
}
</style>
